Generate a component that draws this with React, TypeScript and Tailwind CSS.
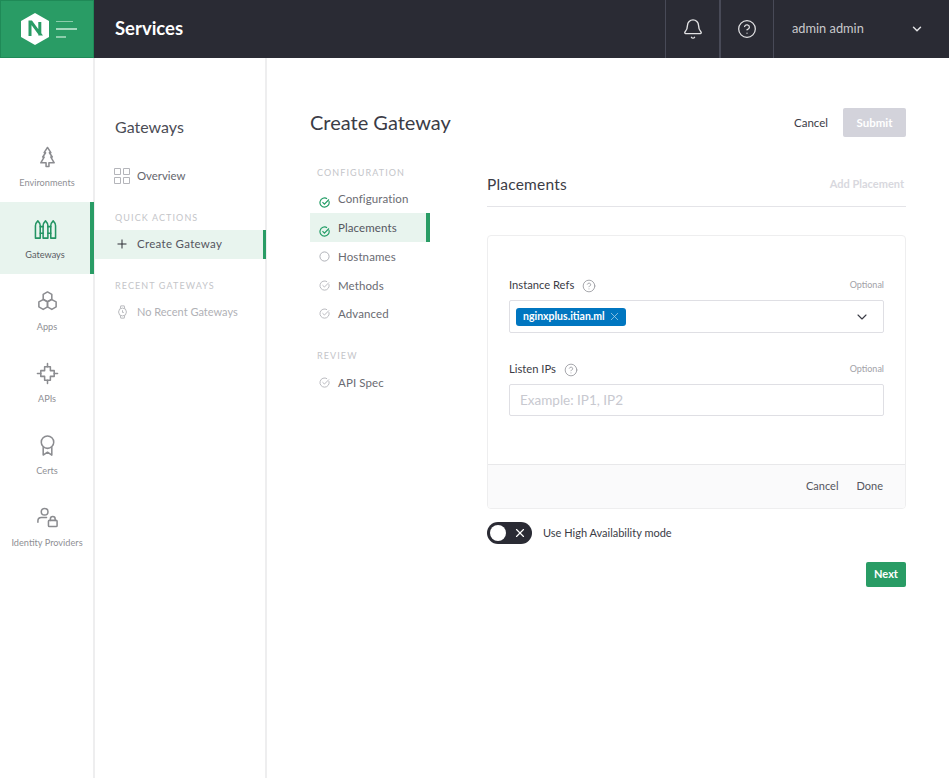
import { Bell, ChevronDown, CircleHelp, Plus, X } from "lucide-react";
import type { ReactNode } from "react";

const FONT = "font-['Lato','Open_Sans',sans-serif]";

function Icon({ children, className = "" }: { children: ReactNode; className?: string }) {
  return (
    <svg viewBox="0 0 24 24" fill="none" stroke="currentColor" strokeWidth="1.600" strokeLinejoin="round" strokeLinecap="round" className={className}>
      {children}
    </svg>
  );
}

const RAIL = [
  {
    label: "Environments",
    icon: <path d="M12 1.500 8.500 7h1.500L7 11.500h1.500L5 17.500h5.500v4h3v-4H19l-3.500-6H17L14 7h1.500z" />,
  },
  {
    label: "Gateways",
    active: true,
    icon: (
      <>
        <path d="M1.500 8c0-2 1.500-4 2.500-5 1 1 2.500 3 2.500 5v13h-5z" />
        <path d="M9.500 8c0-2 1.500-4 2.500-5 1 1 2.500 3 2.500 5v13h-5z" />
        <path d="M17.500 8c0-2 1.500-4 2.500-5 1 1 2.500 3 2.500 5v13h-5z" />
        <path d="M6.500 9h3M14.500 9h3M6.500 16h3M14.500 16h3" />
      </>
    ),
  },
  {
    label: "Apps",
    icon: (
      <>
        <path d="m12 2 4.500 2.600v5L12 12.200 7.500 9.600v-5z" />
        <path d="m7.500 10 4.500 2.400v5.200l-4.500 2.600L3 17.600v-5.200z" />
        <path d="m16.500 10 4.500 2.400v5.200l-4.500 2.600-4.500-2.600v-5.200z" />
      </>
    ),
  },
  {
    label: "APIs",
    icon: (
      <>
        <path d="M9 5h6v4h4v6h-4v4H9v-4H5V9h4z" />
        <path d="M12 1.500V5M12 19v3.500M1.500 12H5M19 12h3.500" />
      </>
    ),
  },
  {
    label: "Certs",
    icon: (
      <>
        <circle cx="12" cy="8.500" r="6.500" />
        <path d="M7.500 14v8l4.500-3 4.500 3v-8" />
      </>
    ),
  },
  {
    label: "Identity Providers",
    icon: (
      <>
        <circle cx="9" cy="6" r="3.500" />
        <path d="M2 17v-1.500c0-2 1.500-3.500 3.500-3.500H11" />
        <rect x="13" y="15" width="9" height="6.500" rx="1" />
        <path d="M15 15v-1.500a2.500 2.500 0 0 1 5 0V15" />
      </>
    ),
  },
];

const STEPS = [
  { label: "Configuration", state: "done", h: "h-[29px]" },
  { label: "Placements", state: "active", h: "h-[29px]" },
  { label: "Hostnames", state: "open", h: "h-[29px]" },
  { label: "Methods", state: "todo", h: "h-[29px]" },
  { label: "Advanced", state: "todo", h: "h-[28px]" },
];

function StepIcon({ state }: { state: string }) {
  if (state === "open") {
    return (
      <svg viewBox="0 0 12 12" className="w-[11px] h-[11px] text-[#a9abb1]" fill="none" stroke="currentColor" strokeWidth="1">
        <circle cx="6" cy="6" r="5" />
      </svg>
    );
  }
  const green = state === "done" || state === "active";
  return (
    <svg
      viewBox="0 0 12 12"
      className={green ? "w-[11px] h-[11px] mt-[7px] text-[#239d66]" : "w-[11px] h-[11px] -mt-[1px] text-[#b4b5ba]"}
      fill="none"
      stroke="currentColor"
      strokeWidth={green ? 1.300 : 1}
    >
      <path d="M10.800 4.500A5 5 0 1 1 8.800 1.900" />
      <path d="m3.800 5.600 2.100 2.100 5-5" />
    </svg>
  );
}

function Label({ text, top }: { text: string; top: string }) {
  return (
    <div className={`flex items-start justify-between ${top}`}>
      <div className="flex items-center text-[11.200px] leading-[18px] text-[#3b3c46]">
        {text}
        <CircleHelp className="ml-[8px] w-[14px] h-[14px] mt-[1px] text-[#9a9ba1]" strokeWidth={1.500} />
      </div>
      <span className="pt-[2px] text-[9px] leading-[14px] text-[#a1a2a8]">Optional</span>
    </div>
  );
}

export default function App() {
  return (
    <div className={`${FONT} h-[778px] w-[949px] overflow-hidden bg-white flex flex-col text-[#4b4c55]`}>
      <header className="h-[58px] shrink-0 bg-[#2a2b34] flex items-stretch text-white">
        <div className="w-[94px] bg-[#299c65] border border-[#1f8a57] flex items-center pl-[20px]">
          <svg viewBox="0 0 28 32" className="w-[28px] h-[32px]">
            <path d="M14 0 28 8v16l-14 8-14-8V8z" fill="#fff" />
            <path d="M9 23V9h1.200L19 21h-.2V9" fill="none" stroke="#299c65" strokeWidth="3" />
          </svg>
          <div className="ml-[7px] flex flex-col gap-[6px]">
            <div className="w-[17px] h-px bg-[#8bcdab]" />
            <div className="w-[21px] h-[2px] bg-[#a3d8bd]" />
            <div className="w-[10px] h-[2px] bg-[#8bcdab]" />
          </div>
        </div>
        <div className="flex-1 flex items-center pl-[21px] text-[18.500px] font-bold">Services</div>
        <div className="w-[54px] border-l border-[#484a57] flex items-center justify-center">
          <Bell className="w-[22px] h-[22px] text-[#e2e2e4]" strokeWidth={1.500} />
        </div>
        <div className="w-[54px] border-l-2 border-[#484a57] flex items-center justify-center">
          <CircleHelp className="w-[20px] h-[20px] text-[#e2e2e4]" strokeWidth={1.500} />
        </div>
        <div className="w-[176px] border-l border-[#484a57] flex items-center pl-[18px] pr-[25px] justify-between">
          <span className="text-[12.800px] text-[#c9c9cc] mb-[1px]">admin admin</span>
          <ChevronDown className="w-[14px] h-[14px] text-[#e2e2e4]" strokeWidth={2.500} />
        </div>
      </header>

      <div className="flex-1 flex min-h-0">
        <nav className="w-[95px] shrink-0 border-r-2 border-[#eeeeef] pt-[72px]">
          {RAIL.map((item) => (
            <div
              key={item.label}
              className={
                item.active
                  ? "h-[72px] w-[94px] bg-[#e8f4ee] border-r-4 border-[#299c65] flex flex-col items-center pt-[16px] text-[#239463]"
                  : "h-[72px] w-[94px] flex flex-col items-center pt-[16px] text-[#8b8c90]"
              }
            >
              <Icon className="w-[23px] h-[23px]">{item.icon}</Icon>
              <span className={item.active ? "mt-[7px] text-[9.200px] leading-[14px] whitespace-nowrap text-[#5a5b62]" : "mt-[7px] text-[9.200px] leading-[14px] whitespace-nowrap text-[#8f9095]"}>
                {item.label}
              </span>
            </div>
          ))}
        </nav>

        <aside className="w-[172px] shrink-0 border-r-2 border-[#eeeeef]">
          <div className="pl-[20px] pt-[59px] text-[16px] leading-[20px] text-[#4b4c55]">Gateways</div>
          <div className="pl-[19px] mt-[30px] flex items-center text-[11.400px] leading-[18px] text-[#65666d]">
            <svg viewBox="0 0 16 16" className="w-[16px] h-[16px] text-[#b4b5ba]" fill="none" stroke="currentColor">
              <path d="M.5.5h6v6h-6zM9.500.5h6v6h-6zM.5 9.500h6v6h-6zM9.500 9.500h6v6h-6z" />
            </svg>
            <span className="ml-[7px]">Overview</span>
          </div>
          <div className="pl-[20px] mt-[26px] text-[9px] leading-[14px] tracking-[1.100px] text-[#c4c5c9]">QUICK ACTIONS</div>
          <div className="mt-[5px] h-[29px] w-[171px] bg-[#e8f4ee] border-r-[3px] border-[#299c65] flex items-center pb-[1px] pl-[20px] text-[11.500px] text-[#55565e]">
            <Plus className="w-[14px] h-[14px] text-[#2a2b34]" strokeWidth={1.700} />
            <span className="ml-[8px] tracking-[0.300px]">Create Gateway</span>
          </div>
          <div className="pl-[20px] mt-[20px] text-[9px] leading-[14px] tracking-[1.100px] text-[#c4c5c9]">RECENT GATEWAYS</div>
          <div className="pl-[22px] mt-[11px] flex items-center text-[11px] leading-[16px] text-[#b0b1b6]">
            <svg viewBox="0 0 12 16" className="w-[11px] h-[14px] text-[#b0b1b6]" fill="none" stroke="currentColor">
              <circle cx="6" cy="8" r="4.500" />
              <path d="M3.500 4 4 1h4l.5 3M3.500 12l.5 3h4l.5-3M6 6v2.500h1.500" />
            </svg>
            <span className="ml-[9px]">No Recent Gateways</span>
          </div>
        </aside>

        <main className="flex-1 pl-[43px] pr-[43px] pt-[50px]">
          <div className="flex items-start justify-between h-[29px]">
            <h1 className="text-[20px] leading-[28px] text-[#3b3c46]">Create Gateway</h1>
            <div className="flex items-center">
              <span className="text-[11.500px] text-[#3b3c46]">Cancel</span>
              <button className="ml-[15px] w-[63px] h-[29px] rounded-[2px] bg-[#d3d3db] text-white text-[11.500px] font-bold">Submit</button>
            </div>
          </div>

          <div className="flex mt-[28px]">
            <div className="w-[177px] shrink-0">
              <div className="pl-[7px] pt-[1px] text-[9px] leading-[14px] tracking-[1.100px] text-[#c4c5c9]">CONFIGURATION</div>
              <div className="mt-[4px]">
                {STEPS.map((step) => (
                  <div
                    key={step.label}
                    className={
                      step.state === "active"
                        ? `${step.h} w-[120px] bg-[#e8f4ee] border-r-4 border-[#299c65] flex items-center pl-[9px] text-[11.500px] tracking-[0.100px] text-[#55565e]`
                        : `${step.h} w-[120px] flex items-center pl-[9px] text-[11.500px] tracking-[0.100px] text-[#6a6b72]`
                    }
                  >
                    <StepIcon state={step.state} />
                    <span className="ml-[8px]">{step.label}</span>
                  </div>
                ))}
              </div>
              <div className="pl-[7px] mt-[21px] text-[9px] leading-[14px] tracking-[1.100px] text-[#c4c5c9]">REVIEW</div>
              <div className="h-[29px] mt-[5px] flex items-center pl-[9px] text-[11.500px] tracking-[0.100px] text-[#6a6b72]">
                <StepIcon state="todo" />
                <span className="ml-[8px]">API Spec</span>
              </div>
            </div>

            <div className="flex-1">
              <div className="flex items-center justify-between h-[42px] pb-[2px] border-b border-[#e4e4e8]">
                <span className="text-[15.500px] text-[#3b3c46] tracking-[0.200px]">Placements</span>
                <span className="text-[11px] font-bold text-[#d8d8de] pr-[2px]">Add Placement</span>
              </div>

              <div className="mt-[28px] h-[274px] rounded-[4px] border border-[#eeeeef] flex flex-col overflow-hidden">
                <div className="flex-1 px-[21px]">
                  <Label text="Instance Refs" top="mt-[40px]" />
                  <div className="mt-[6px] h-[33px] rounded-[2px] border border-[#dfdfe4] flex items-center justify-between pl-[6px] pr-[13px]">
                    <span className="h-[18px] rounded-[3px] bg-[#0076c0] text-white flex items-center pl-[7px] pr-[5px] text-[10.500px] font-bold">
                      nginxplus.itian.ml
                      <X className="ml-[3px] w-[13px] h-[13px] text-[#9fcbe6]" strokeWidth={1.500} />
                    </span>
                    <ChevronDown className="w-[16px] h-[16px] text-[#3b3c46]" strokeWidth={1.700} />
                  </div>
                  <Label text="Listen IPs" top="mt-[27px]" />
                  <div className="mt-[6px] h-[32px] rounded-[2px] border border-[#dfdfe4] flex items-center pl-[10px] text-[13.500px] text-[#c8c9d0]">Example: IP1, IP2</div>
                </div>
                <div className="h-[44px] border-t border-[#e8e8ea] bg-[#fafafb] flex items-center justify-end pr-[22px] gap-[18px] text-[11px] text-[#55565e]">
                  <span>Cancel</span>
                  <span>Done</span>
                </div>
              </div>

              <div className="mt-[13px] flex items-center">
                <div className="w-[45px] h-[22px] rounded-full bg-[#2a2b34] flex items-center justify-between pl-[3px] pr-[5px]">
                  <span className="w-[16px] h-[16px] rounded-full bg-white" />
                  <X className="w-[14px] h-[14px] text-white" strokeWidth={2} />
                </div>
                <span className="ml-[11px] text-[11px] text-[#3b3c46]">Use High Availability mode</span>
              </div>

              <div className="mt-[18px] flex justify-end">
                <button className="w-[40px] h-[25px] rounded-[2px] bg-[#299c65] text-white text-[11px] font-bold">Next</button>
              </div>
            </div>
          </div>
        </main>
      </div>
    </div>
  );
}
